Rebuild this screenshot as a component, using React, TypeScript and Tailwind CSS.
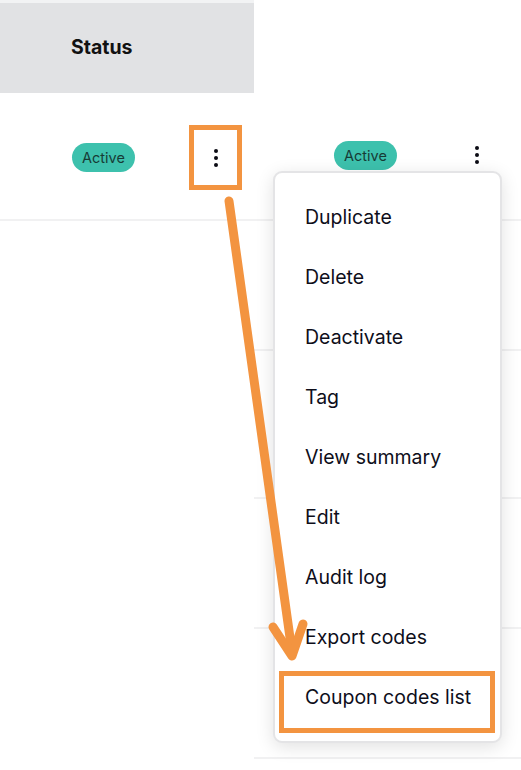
import React from "react";

const menuItems = [
  "Duplicate",
  "Delete",
  "Deactivate",
  "Tag",
  "View summary",
  "Edit",
  "Audit log",
  "Export codes",
  "Coupon codes list",
];

function Kebab() {
  return (
    <div className="flex flex-col items-center gap-[3px]">
      <span className="block h-[4px] w-[4px] rounded-full bg-[#0b0b14]" />
      <span className="block h-[4px] w-[4px] rounded-full bg-[#0b0b14]" />
      <span className="block h-[4px] w-[4px] rounded-full bg-[#0b0b14]" />
    </div>
  );
}

function Badge() {
  return (
    <span className="inline-flex h-[29px] w-[63px] items-center justify-center rounded-full bg-[#3dc1ad] text-[14.5px] text-[#173b36]">
      Active
    </span>
  );
}

export default function App() {
  return (
    <div
      className="relative h-[770px] w-[521px] overflow-hidden bg-white"
      style={{ fontFamily: "Inter, 'Noto Sans', sans-serif" }}
    >
      <div className="flex">
        {/* left table column */}
        <div className="w-[254px] shrink-0">
          <div className="h-[3px] bg-[#f2f3f4]" />
          <div className="flex h-[90px] items-center bg-[#e1e2e4] pl-[71px] text-[19.5px] font-bold text-[#111]">
            Status
          </div>
          <div className="flex h-[128px] items-center border-b-2 border-[#f1f1f2] pl-[72px] pt-[3px]">
            <Badge />
            <div className="ml-[54px] flex h-[65px] w-[53px] items-center justify-center border-[5px] border-[#f39440]">
              <Kebab />
            </div>
          </div>
        </div>

        {/* right table column */}
        <div className="flex-1">
          <div className="flex h-[221px] items-start border-b-2 border-[#f1f1f2] pl-[80px] pt-[141px]">
            <Badge />
            <div className="ml-[78px] mt-[5px]">
              <Kebab />
            </div>
          </div>
          <div className="h-[130px] border-b-2 border-[#f1f1f2]" />
          <div className="h-[148px] border-b-2 border-[#f1f1f2]" />
          <div className="h-[130px] border-b-2 border-[#f1f1f2]" />
          <div className="h-[130px] border-b-2 border-[#f1f1f2]" />
        </div>
      </div>

      {/* dropdown menu */}
      <div className="absolute left-[273px] top-[171px] w-[229px] rounded-[9px] border-2 border-[#e4e4e6] bg-white py-[14px] shadow-[0_4px_18px_rgba(0,0,0,0.12)]">
        {menuItems.map((item) => (
          <div
            key={item}
            className="flex h-[60px] items-center pl-[30px] pt-[2px] text-[19.5px] font-normal text-[#0e0e1a]"
          >
            {item}
          </div>
        ))}
      </div>

      {/* highlight around last menu entry */}
      <div className="absolute left-[279px] top-[671px] h-[62px] w-[216px] border-[5px] border-[#f39440]" />

      {/* pointer arrow */}
      <svg
        className="absolute left-0 top-0"
        width="521"
        height="770"
        viewBox="0 0 521 770"
      >
        <g
          stroke="#f39440"
          strokeWidth="9"
          strokeLinecap="round"
          strokeLinejoin="round"
          fill="none"
        >
          <line x1="229" y1="201" x2="292" y2="652" />
          <polyline points="273,627 292,656 303,624" />
        </g>
      </svg>
    </div>
  );
}
